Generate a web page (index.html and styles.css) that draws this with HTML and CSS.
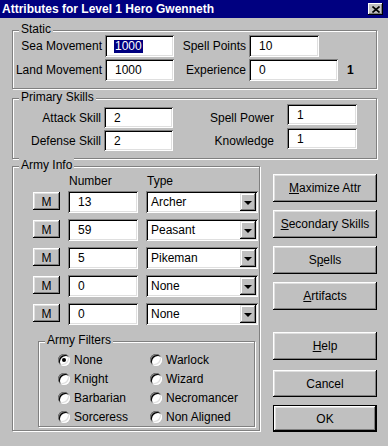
FILE: index.html
```html
<!DOCTYPE html>
<html>
<head>
<meta charset="utf-8">
<title>Attributes</title>
<link rel="stylesheet" href="styles.css">
</head>
<body>
<div class="window">
  <div class="titlebar">
    <span class="title">Attributes for Level 1 Hero Gwenneth</span>
    <span class="close"><svg width="8" height="7" viewBox="0 0 8 7"><path d="M0.5 0.5 L7.5 6.5 M7.5 0.5 L0.5 6.5" stroke="#000" stroke-width="1.6" fill="none"/></svg></span>
  </div>
  <div class="client">
    <div class="group static">
      <span class="legend">Static</span>
      <div class="static-grid">
        <span class="lbl">Sea Movement</span>
        <div class="field"><span class="sel">1000</span></div>
        <span class="lbl">Spell Points</span>
        <div class="field w70">10</div>
        <span></span>
        <span class="lbl">Land Movement</span>
        <div class="field">1000</div>
        <span class="lbl">Experience</span>
        <div class="field">0</div>
        <b class="level">1</b>
      </div>
    </div>

    <div class="group primary">
      <span class="legend">Primary Skills</span>
      <div class="primary-grid">
        <span class="lbl">Attack Skill</span>
        <div class="field f21">2</div>
        <span class="lbl lbl-r">Spell Power</span>
        <div class="field f21 up3">1</div>
        <span class="lbl">Defense Skill</span>
        <div class="field f21">2</div>
        <span class="lbl lbl-r">Knowledge</span>
        <div class="field f21 up2">1</div>
      </div>
    </div>

    <div class="lower">
      <div class="group army">
        <span class="legend">Army Info</span>
        <div class="army-head">
          <span></span><span>Number</span><span>Type</span>
        </div>
        <div class="army-grid">
          <div class="btn mbtn">M</div>
          <div class="field">13</div>
          <div class="field combo"><span>Archer</span><span class="drop"><i></i></span></div>

          <div class="btn mbtn">M</div>
          <div class="field">59</div>
          <div class="field combo"><span>Peasant</span><span class="drop"><i></i></span></div>

          <div class="btn mbtn">M</div>
          <div class="field">5</div>
          <div class="field combo"><span>Pikeman</span><span class="drop"><i></i></span></div>

          <div class="btn mbtn">M</div>
          <div class="field">0</div>
          <div class="field combo"><span>None</span><span class="drop"><i></i></span></div>

          <div class="btn mbtn">M</div>
          <div class="field">0</div>
          <div class="field combo"><span>None</span><span class="drop"><i></i></span></div>
        </div>

        <div class="group filters">
          <span class="legend">Army Filters</span>
          <div class="radio-grid">
            <div class="opt"><span class="radio checked"></span>None</div>
            <div class="opt"><span class="radio"></span>Warlock</div>
            <div class="opt"><span class="radio"></span>Knight</div>
            <div class="opt"><span class="radio"></span>Wizard</div>
            <div class="opt"><span class="radio"></span>Barbarian</div>
            <div class="opt"><span class="radio"></span>Necromancer</div>
            <div class="opt"><span class="radio"></span>Sorceress</div>
            <div class="opt"><span class="radio"></span>Non Aligned</div>
          </div>
        </div>
      </div>

      <div class="side">
        <div class="btn side-btn"><span><u>M</u>aximize Attr</span></div>
        <div class="btn side-btn"><span><u>S</u>econdary Skills</span></div>
        <div class="btn side-btn"><span>S<u>p</u>ells</span></div>
        <div class="btn side-btn"><span><u>A</u>rtifacts</span></div>
        <div class="btn side-btn help"><span><u>H</u>elp</span></div>
        <div class="btn side-btn cancel"><span>Cancel</span></div>
        <div class="default-wrap"><div class="btn side-btn ok"><span>OK</span></div></div>
      </div>
    </div>
  </div>
</div>
</body>
</html>
```
FILE: styles.css
```css
* { box-sizing: border-box; }
html, body { margin: 0; padding: 0; }
body {
  width: 388px;
  height: 446px;
  overflow: hidden;
  background: #c0c0c0;
  font-family: "Liberation Sans", Arial, sans-serif;
  font-size: 12px;
  line-height: 14px;
  color: #000;
}
.window {
  width: 388px;
  height: 446px;
  background: #c0c0c0;
  display: flex;
  flex-direction: column;
}
.titlebar {
  height: 18px;
  flex: none;
  background: #000080;
  color: #fff;
  display: flex;
  align-items: center;
  justify-content: space-between;
  padding: 0 5px 0 2px;
}
.title { font-weight: bold; font-size: 12px; line-height: 14px; }
.close {
  width: 15px;
  height: 12px;
  background: #c0c0c0;
  display: flex;
  align-items: center;
  justify-content: center;
  box-shadow: inset -1px -1px #000, inset 1px 1px #fff, inset -2px -2px #808080;
}
.close svg { display: block; }

.client { flex: 1; padding: 12px 11px 0 12px; }

.group {
  position: relative;
  border: 1px solid #808080;
  box-shadow: 1px 1px 0 #fff, inset 1px 1px 0 #fff;
}
.legend {
  position: absolute;
  top: -9px;
  left: 6px;
  padding: 0 2px;
  background: #c0c0c0;
  line-height: 14px;
  white-space: nowrap;
}

.field {
  background: #fff;
  height: 22px;
  display: flex;
  align-items: center;
  padding-left: 10px;
  box-shadow: inset 1px 1px #808080, inset -1px -1px #fff, inset 2px 2px #000, inset -2px -2px #dfdfdf;
  white-space: nowrap;
}
.f21 { height: 21px; }
.sel {
  background: #000080;
  color: #fff;
  line-height: 13px;
  padding: 0 1px;
  margin-left: -1px;
}
.lbl {
  text-align: right;
  padding-right: 3px;
  align-self: center;
  white-space: nowrap;
}

/* Static */
.static { height: 59px; }
.static-grid {
  padding-top: 4px;
  display: grid;
  grid-template-columns: 92px 69px 75px 89px auto;
  grid-auto-rows: 22px;
  row-gap: 2px;
}
.w70 { width: 70px; }
.level { align-self: center; margin-left: 9px; font-weight: bold; }

/* Primary */
.primary { height: 61px; margin-top: 9px; }
.primary-grid {
  padding-top: 8px;
  display: grid;
  grid-template-columns: 91px 69px 114px 70px;
  grid-auto-rows: 21px;
  row-gap: 2px;
}
.lbl-r { padding-right: 13px; }
.up3 { margin: -3px 0 3px; }
.up2 { margin: -2px 0 2px; }

/* Lower area */
.lower { display: flex; margin-top: 7px; }
.army { width: 248px; height: 265px; flex: none; padding-left: 20px; }
.army-head {
  display: grid;
  grid-template-columns: 27px 70px 112px;
  column-gap: 8px;
  margin-top: 7px;
  height: 14px;
}
.army-head span:nth-child(2), .army-head span:nth-child(3) { padding-left: 1px; }
.army-grid {
  margin-top: 3px;
  display: grid;
  grid-template-columns: 27px 70px 112px;
  grid-auto-rows: 22px;
  column-gap: 8px;
  row-gap: 6px;
}
.btn {
  background: #c0c0c0;
  box-shadow: inset -1px -1px #000, inset 1px 1px #fff, inset -2px -2px #808080, inset 2px 2px #dfdfdf;
  display: flex;
  align-items: center;
  justify-content: center;
  white-space: nowrap;
}
.mbtn { height: 18px; margin-top: 1px; padding-top: 1px; }
.combo { padding-left: 5px; padding-right: 2px; justify-content: space-between; }
.drop {
  width: 16px;
  height: 18px;
  background: #c0c0c0;
  box-shadow: inset -1px -1px #000, inset 1px 1px #dfdfdf, inset -2px -2px #808080, inset 2px 2px #fff;
  display: flex;
  align-items: center;
  justify-content: center;
}
.drop i {
  display: block;
  width: 0;
  height: 0;
  border-left: 4px solid transparent;
  border-right: 4px solid transparent;
  border-top: 4px solid #000;
  margin-top: 1px;
}

.filters {
  width: 217px;
  height: 86px;
  margin: 16px 0 0 5px;
  padding: 8px 0 0 19px;
}
.radio-grid {
  display: grid;
  grid-template-columns: 92px 100px;
  grid-auto-rows: 19px;
}
.opt { display: flex; align-items: center; white-space: nowrap; }
.radio {
  width: 12px;
  height: 12px;
  border-radius: 50%;
  background: #fff;
  margin-right: 4px;
  flex: none;
  box-shadow: inset 1px 1px #808080, inset -1px -1px #fff, inset 2px 2px #000, inset -2px -2px #dfdfdf;
  display: flex;
  align-items: center;
  justify-content: center;
}
.radio.checked::after {
  content: "";
  width: 4px;
  height: 4px;
  border-radius: 50%;
  background: #000;
}

/* Side buttons */
.side {
  margin-left: 13px;
  width: 105px;
  padding-top: 8px;
  display: flex;
  flex-direction: column;
  gap: 8px;
}
.side-btn { height: 28px; flex: none; }
.help { margin-top: 14px; }
.cancel { margin-top: 2px; height: 27px; }
.default-wrap { border: 1px solid #000; flex: none; }
.ok { height: 25px; }
```
